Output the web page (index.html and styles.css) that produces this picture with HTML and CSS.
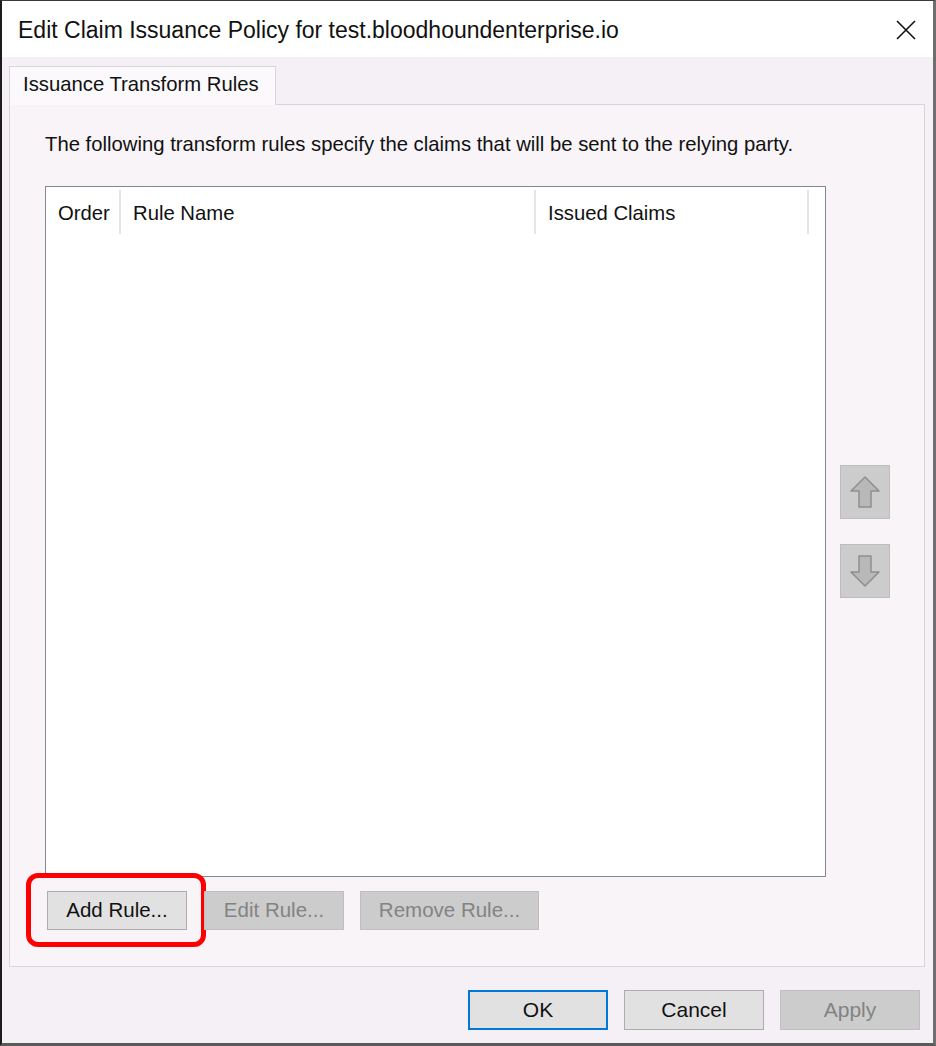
FILE: index.html
```html
<!DOCTYPE html>
<html lang="en">
<head>
    <meta charset="UTF-8">
    <title>Edit Claim Issuance Policy</title>
    <link rel="stylesheet" href="styles.css">
</head>
<body>
    <div class="dialog">
        <div class="titlebar">
            <span class="title">Edit Claim Issuance Policy for test.bloodhoundenterprise.io</span>
            <svg class="close" width="22" height="22" viewBox="0 0 22 22">
                <path d="M2 2 L20 20 M20 2 L2 20" stroke="#111" stroke-width="1.6" fill="none"/>
            </svg>
        </div>

        <div class="content">
            <div class="tabs">
                <div class="tab">Issuance Transform Rules</div>
            </div>

            <div class="panel">
                <p class="intro">The following transform rules specify the claims that will be sent to the relying party.</p>

                <div class="list-row">
                    <div class="listbox">
                        <div class="list-header">
                            <div class="col col-order">Order</div>
                            <div class="col col-name">Rule Name</div>
                            <div class="col col-claims">Issued Claims</div>
                        </div>
                    </div>

                    <div class="move-buttons">
                        <div class="move-btn">
                            <svg width="32" height="34" viewBox="0 0 32 34">
                                <path d="M16 2 L30 16 L22 16 L22 32 L10 32 L10 16 L2 16 Z" fill="#b8b8b8" stroke="#8e8e8e" stroke-width="1.5" stroke-linejoin="round"/>
                            </svg>
                        </div>
                        <div class="move-btn">
                            <svg width="32" height="34" viewBox="0 0 32 34">
                                <path d="M16 32 L30 18 L22 18 L22 2 L10 2 L10 18 L2 18 Z" fill="#b8b8b8" stroke="#8e8e8e" stroke-width="1.5" stroke-linejoin="round"/>
                            </svg>
                        </div>
                    </div>
                </div>

                <div class="rule-buttons">
                    <div class="highlight">
                        <button class="btn">Add Rule...</button>
                    </div>
                    <button class="btn btn-edit" disabled>Edit Rule...</button>
                    <button class="btn btn-remove" disabled>Remove Rule...</button>
                </div>
            </div>
        </div>

        <div class="footer">
            <button class="btn btn-footer btn-default">OK</button>
            <button class="btn btn-footer">Cancel</button>
            <button class="btn btn-footer" disabled>Apply</button>
        </div>
    </div>
</body>
</html>
```

FILE: styles.css
```css
html, body {
    margin: 0;
    padding: 0;
    background-color: #2a2a2a;
}
body {
    width: 936px;
    height: 1046px;
    font-family: 'Liberation Sans', Arial, sans-serif;
    color: #111;
}
.dialog {
    box-sizing: border-box;
    width: 936px;
    height: 1046px;
    border-left: 2px solid #1c1c1c;
    border-top: 1px solid #3a3a3a;
    border-right: 3px solid #6e6e6e;
    border-bottom: 3px solid #5a5a5a;
    background-color: #f5f0f5;
    display: flex;
    flex-direction: column;
}
.titlebar {
    height: 56px;
    background-color: #ffffff;
    display: flex;
    align-items: center;
    justify-content: space-between;
    padding: 0 16px 0 16px;
}
.title {
    font-size: 23px;
    margin-top: 2px;
}
.close {
    margin-top: 2px;
}
.content {
    padding: 9px 8px 0 7px;
}
.tabs {
    display: flex;
    height: 38px;
}
.tab {
    box-sizing: border-box;
    width: 267px;
    background-color: #fbf9fb;
    border: 1px solid #d9d6d9;
    border-bottom: none;
    padding: 6px 0 0 13px;
    font-size: 20.3px;
    position: relative;
    z-index: 1;
    height: 39px;
}
.panel {
    box-sizing: border-box;
    height: 863px;
    border: 1px solid #d9d6d9;
    background-color: #f8f4f8;
    padding: 0 0 0 35px;
}
.intro {
    margin: 28px 0 0 0;
    font-size: 20.3px;
}
.list-row {
    display: flex;
    margin-top: 30px;
}
.listbox {
    box-sizing: border-box;
    width: 781px;
    height: 691px;
    border: 1px solid #828790;
    background-color: #ffffff;
}
.list-header {
    display: flex;
    height: 44px;
    margin-top: 3px;
}
.col {
    box-sizing: border-box;
    border-right: 2px solid #e5e5e5;
    font-size: 20.3px;
    padding: 12px 0 0 12px;
}
.col-order {
    width: 75px;
}
.col-name {
    width: 415px;
}
.col-claims {
    width: 273px;
}
.move-buttons {
    display: flex;
    flex-direction: column;
    gap: 25px;
    margin: 279px 0 0 14px;
}
.move-btn {
    box-sizing: border-box;
    width: 50px;
    height: 54px;
    background-color: #cccccc;
    border: 1px solid #bdbdbd;
    display: flex;
    align-items: center;
    justify-content: center;
}
.rule-buttons {
    display: flex;
    align-items: center;
    gap: 16px;
    margin: -4px 0 0 0;
}
.highlight {
    box-sizing: border-box;
    width: 180px;
    height: 74px;
    margin-left: -19px;
    margin-right: -18px;
    border: 5px solid #ff0000;
    border-radius: 12px;
    display: flex;
    align-items: center;
    padding-left: 16px;
}
.btn {
    box-sizing: border-box;
    width: 140px;
    height: 39px;
    font-family: 'Liberation Sans', Arial, sans-serif;
    font-size: 20.5px;
    color: #111;
    background-color: #e1e1e1;
    border: 1px solid #adadad;
    padding: 0;
}
.btn:disabled {
    background-color: #cccccc;
    border-color: #bfbfbf;
    color: #838383;
}
.btn-remove {
    width: 179px;
}
.footer {
    display: flex;
    justify-content: flex-end;
    gap: 16px;
    padding: 23px 13px 0 0;
}
.btn-footer {
    width: 140px;
    height: 40px;
    font-size: 21px;
}
.btn-default {
    border: 2px solid #0078d7;
}
```
